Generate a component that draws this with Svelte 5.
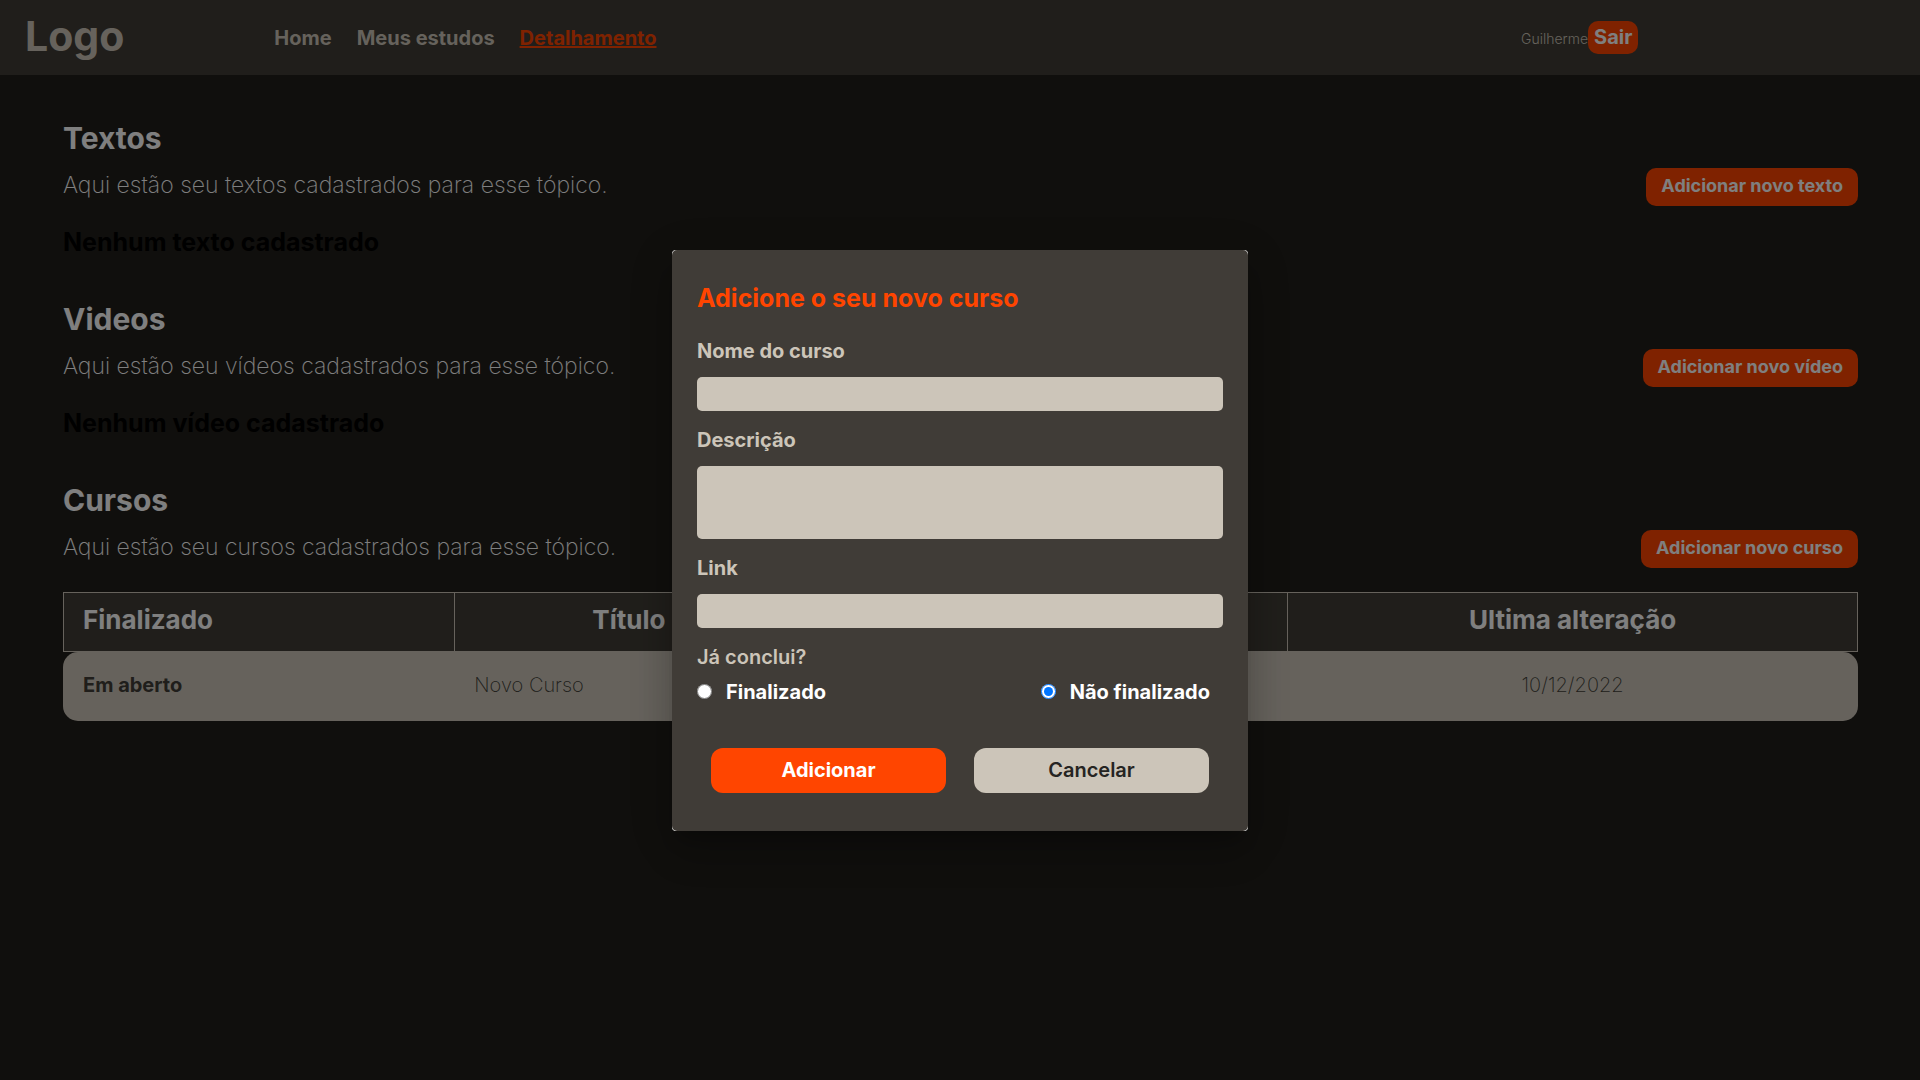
<script>
  const links = [
    { label: 'Home', active: false },
    { label: 'Meus estudos', active: false },
    { label: 'Detalhamento', active: true }
  ];

  const cursos = [{ status: 'Em aberto', titulo: 'Novo Curso', data: '10/12/2022' }];

  const sections = [
    { title: 'Textos', text: 'Aqui estão seu textos cadastrados para esse tópico.', action: 'Adicionar novo texto', empty: 'Nenhum texto cadastrado', rows: [] },
    { title: 'Videos', text: 'Aqui estão seu vídeos cadastrados para esse tópico.', action: 'Adicionar novo vídeo', empty: 'Nenhum vídeo cadastrado', rows: [] },
    { title: 'Cursos', text: 'Aqui estão seu cursos cadastrados para esse tópico.', action: 'Adicionar novo curso', empty: '', rows: cursos }
  ];

  let nome = $state('');
  let descricao = $state('');
  let link = $state('');
  let status = $state('aberto');
</script>

<div class="page">
  <header class="topbar">
    <span class="logo">Logo</span>
    <nav class="nav">
      {#each links as item}
        <a href="#top" class:active={item.active}>{item.label}</a>
      {/each}
    </nav>
    <div class="user">
      <span class="username">Guilherme</span>
      <button type="button" class="logout">Sair</button>
    </div>
  </header>

  <main class="content">
    {#each sections as section}
      <section>
        <h2>{section.title}</h2>
        <div class="intro">
          <p>{section.text}</p>
          <button type="button" class="add">{section.action}</button>
        </div>
        {#if section.rows.length}
          <table>
            <colgroup>
              <col class="c-status" /><col class="c-title" /><col class="c-mid" /><col class="c-date" />
            </colgroup>
            <thead>
              <tr><th>Finalizado</th><th>Título</th><th></th><th>Ultima alteração</th></tr>
            </thead>
            <tbody>
              {#each section.rows as row}
                <tr>
                  <td class="status">{row.status}</td>
                  <td>{row.titulo}</td>
                  <td></td>
                  <td class="date">{row.data}</td>
                </tr>
              {/each}
            </tbody>
          </table>
        {:else}
          <h3>{section.empty}</h3>
        {/if}
      </section>
    {/each}
  </main>
</div>

<div class="overlay">
  <div class="paper" role="dialog" aria-modal="true" aria-labelledby="modal-title">
    <form class="form" onsubmit={(e) => e.preventDefault()}>
      <h1 id="modal-title">Adicione o seu novo curso</h1>
      <div class="field">
        <label for="nome">Nome do curso</label>
        <input id="nome" type="text" bind:value={nome} />
      </div>
      <div class="field">
        <label for="descricao">Descrição</label>
        <textarea id="descricao" bind:value={descricao}></textarea>
      </div>
      <div class="field">
        <label for="link">Link</label>
        <input id="link" type="text" bind:value={link} />
      </div>
      <fieldset>
        <legend>Já conclui?</legend>
        <div class="options">
          <label><input type="radio" value="finalizado" bind:group={status} />Finalizado</label>
          <label><input type="radio" value="aberto" bind:group={status} />Não finalizado</label>
        </div>
      </fieldset>
      <div class="actions">
        <button type="submit" class="confirm">Adicionar</button>
        <button type="button" class="cancel">Cancelar</button>
      </div>
    </form>
  </div>
</div>

<style>
  :global(body) {
    margin: 0;
    background: #201e1a;
    font-family: Inter, 'Open Sans', sans-serif;
  }
  h1, h2, h3, p { margin: 0; }
  button {
    border: 0;
    font-family: inherit;
    font-weight: 700;
    cursor: pointer;
  }

  .topbar {
    display: grid;
    grid-template-columns: 20fr 100fr 32fr;
    align-items: center;
    height: 75px;
    padding-left: 25px;
    background: #403d36;
    color: #ccc5b9;
  }
  .logo {
    padding-bottom: 3px;
    font-size: 41px;
    line-height: 48px;
    font-weight: 700;
  }
  .nav { display: flex; gap: 25px; }
  .nav a {
    color: #ccc5b9;
    font-size: 20px;
    line-height: 30px;
    font-weight: 700;
    text-decoration: none;
  }
  .nav a.active { color: #ff4500; text-decoration: underline; }
  .user { display: flex; align-items: baseline; }
  .username { font-size: 14px; font-weight: 300; }
  .logout {
    padding: 4px 6px 5px;
    border-radius: 10px;
    background: #ff4500;
    color: #fff;
    font-size: 20px;
    line-height: 24px;
  }

  .content {
    display: flex;
    flex-direction: column;
    gap: 42px;
    padding: 43px 62px 0 63px;
    color: #fff;
  }
  h2 { margin-bottom: 10px; font-size: 30px; line-height: 40px; }
  h3 { margin-top: 21px; color: #000; font-size: 25px; line-height: 30px; font-weight: 700; }
  .intro {
    display: flex;
    justify-content: space-between;
    align-items: flex-start;
  }
  .intro p { font-size: 23px; line-height: 34px; font-weight: 200; }
  .add {
    padding: 6px 15px 8px;
    border-radius: 10px;
    background: #ff4500;
    color: #fff;
    font-size: 18px;
    line-height: 24px;
  }

  table {
    width: 100%;
    margin-top: 24px;
    table-layout: fixed;
    border-collapse: separate;
    border-spacing: 0;
  }
  .c-status { width: 21.8%; }
  .c-title { width: 19.4%; }
  .c-mid { width: 27%; }
  .c-date { width: 31.8%; }
  th {
    padding: 11px 20px 15px;
    border: 1px solid #ccc5b9;
    border-right: 0;
    background: #403d36;
    font-size: 26px;
    line-height: 32px;
  }
  th:first-child { padding-left: 19px; text-align: left; }
  th:last-child { border-right: 1px solid #ccc5b9; }
  td {
    padding: 21px 20px 24px;
    background: #ccc5b9;
    color: #403d36;
    font-size: 20px;
    line-height: 24px;
    font-weight: 200;
  }
  td:first-child { border-radius: 15px 0 0 15px; }
  td:last-child { border-radius: 0 15px 15px 0; }
  td.status { font-weight: 700; }
  .date { text-align: center; }

  .overlay {
    position: fixed;
    inset: 0;
    display: flex;
    align-items: center;
    justify-content: center;
    background: rgba(0, 0, 0, 0.5);
  }
  .paper {
    width: 30%;
    min-width: 480px;
    border-radius: 4px;
    background: #fff;
    box-shadow:
      0 11px 15px -7px rgba(0, 0, 0, 0.2),
      0 24px 38px 3px rgba(0, 0, 0, 0.14),
      0 9px 46px 8px rgba(0, 0, 0, 0.12);
  }
  .form {
    display: flex;
    flex-direction: column;
    padding: 33px 25px 38px;
    border-radius: 5px;
    background: #403c37;
    color: #ccc5b9;
    font-size: 20px;
    line-height: 24px;
  }
  h1 {
    margin-bottom: 26px;
    color: #ff4500;
    font-size: 25px;
    line-height: 30px;
    font-weight: 700;
  }
  .field {
    display: flex;
    flex-direction: column;
    gap: 14px;
    margin-bottom: 17px;
    font-weight: 700;
  }
  .field input, textarea {
    box-sizing: border-box;
    width: 100%;
    height: 34px;
    padding: 5px 8px;
    border: 0;
    border-radius: 5px;
    background: #ccc5b9;
    color: #252422;
    font: 400 16px/24px Inter, sans-serif;
  }
  textarea { height: 73px; resize: none; }
  fieldset { min-width: 0; margin: 0; padding: 0; border: 0; }
  legend { padding: 0; font-weight: 600; }
  .options {
    display: flex;
    justify-content: space-between;
    margin-top: 11px;
    padding-right: 13px;
    color: #fff;
    font-weight: 700;
  }
  .options label { display: flex; align-items: center; gap: 14px; }
  .options input { width: 15px; height: 15px; margin: 0; }
  .actions {
    display: grid;
    grid-template-columns: 1fr 1fr;
    gap: 28px;
    margin-top: 44px;
    padding: 0 14px;
  }
  .actions button {
    padding: 10px 0 11px;
    border-radius: 12px;
    font-size: 20px;
    line-height: 24px;
  }
  .confirm { background: #ff4500; color: #fff; }
  .actions .cancel { background: #ccc5b9; color: #252422; font-weight: 600; }
</style>
